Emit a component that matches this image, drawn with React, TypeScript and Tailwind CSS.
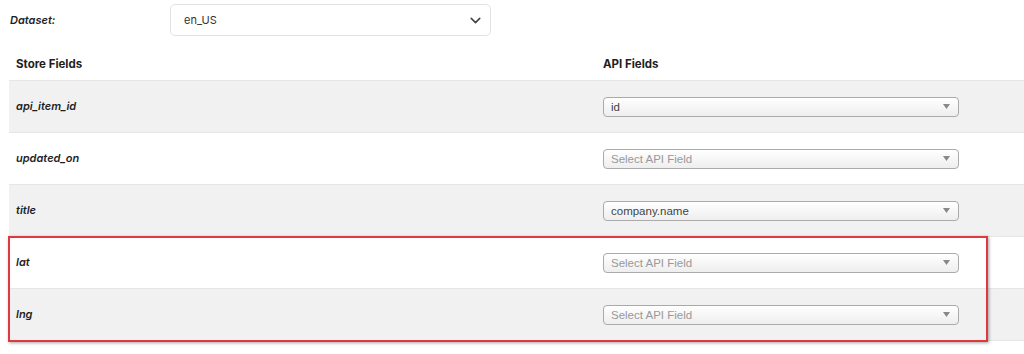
import { ChevronDown } from "lucide-react";

type Row = { field: string; value?: string };

const rows: Row[] = [
  { field: "api_item_id", value: "id" },
  { field: "updated_on" },
  { field: "title", value: "company.name" },
  { field: "lat" },
  { field: "lng" },
];

function ApiSelect({ value }: { value?: string }) {
  return (
    <div className="flex h-[20px] w-[356px] items-center justify-between rounded-[4px] border border-[#aaaaaa] bg-gradient-to-b from-white to-[#eeeeee] pl-[7px] pr-[8px] font-['Liberation_Sans',Arial,sans-serif] text-[11.5px] leading-none">
      <span className={`mt-[2px] ${value ? "text-[#444444]" : "text-[#999999]"}`}>
        {value ?? "Select API Field"}
      </span>
      <svg width="7" height="5" viewBox="0 0 7 5" className="text-[#888888]">
        <path d="M0 0h7L3.5 5z" fill="currentColor" />
      </svg>
    </div>
  );
}

export default function App() {
  return (
    <div className="relative h-[354px] w-[1024px] overflow-hidden bg-white font-['Inter',sans-serif] text-[#1e1e1e]">
      {/* Dataset */}
      <div className="flex h-[40px] items-center">
        <div className="w-[170px] pl-[10px] text-[11px] font-semibold italic">Dataset:</div>
        <div className="flex h-[32px] w-[321px] items-center justify-between rounded-[5px] border border-[#e2e2e2] bg-white pl-[13px] pr-[6px]">
          <span className="text-[11px] text-[#333333]">en_US</span>
          <ChevronDown className="h-[17px] w-[17px] text-[#444444]" strokeWidth={2.2} />
        </div>
      </div>

      {/* Table */}
      <div className="ml-[9px] w-[1015px]">
        <div className="grid grid-cols-[586px_1fr] pb-[8px] pt-[16px] text-[11.5px] font-bold leading-[16px]">
          <div className="pl-[7px]">Store Fields</div>
          <div className="pl-[8px]">API Fields</div>
        </div>
        {rows.map((r, i) => (
          <div
            key={r.field}
            className={`grid h-[52px] grid-cols-[586px_1fr] items-center border-t border-[#e6e6e6] ${
              i % 2 === 0 ? "bg-[#f1f1f1]" : "bg-white"
            }`}
          >
            <div className="pl-[7px] text-[11px] font-semibold italic">{r.field}</div>
            <div className="pl-[8px]">
              <ApiSelect value={r.value} />
            </div>
          </div>
        ))}
        <div className="border-t border-[#e6e6e6]" />
      </div>

      {/* Highlight */}
      <div className="pointer-events-none absolute left-[8px] top-[236px] h-[106px] w-[980px] border-2 border-[#e2373c] shadow-[1px_1px_3px_rgba(0,0,0,0.35)]" />
    </div>
  );
}
